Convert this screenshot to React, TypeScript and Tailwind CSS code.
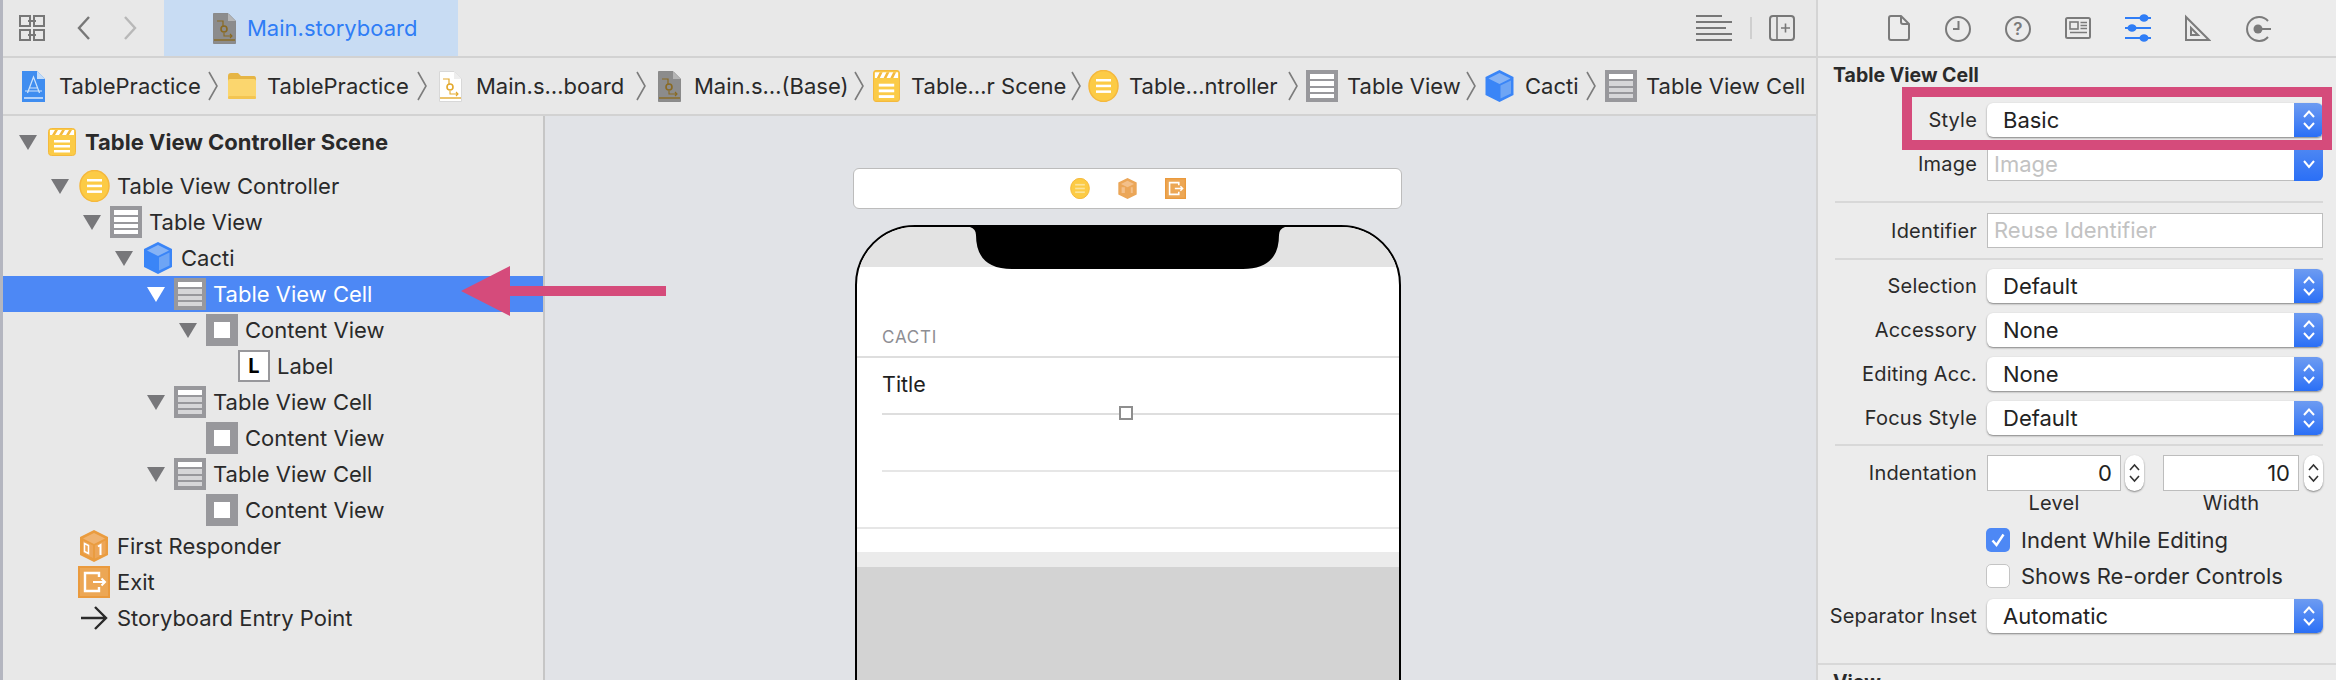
const font = "font-['Inter','Liberation_Sans',sans-serif]";

function Triangle({ white }: { white?: boolean }) {
  return (
    <svg width="18" height="15" viewBox="0 0 18 15" className="shrink-0">
      <path d="M0 0H18L9 15Z" fill={white ? "#ffffff" : "#77777a"} />
    </svg>
  );
}

function SceneIcon({ w = 28, h = 28 }: { w?: number; h?: number }) {
  return (
    <svg width={w} height={h} viewBox="0 0 28 28" preserveAspectRatio="none" className="shrink-0">
      <rect x="0.5" y="0.5" width="27" height="27" rx="3" fill="#fbcb47" stroke="#f4b93d" />
      <rect x="2" y="2" width="24" height="5" fill="#ffffff" />
      <path d="M4 7l3-5h3l-3 5zM11 7l3-5h3l-3 5zM18 7l3-5h3l-3 5z" fill="#f4b93d" />
      <rect x="6" y="12" width="16" height="2.5" fill="#fff" />
      <rect x="6" y="17" width="16" height="2.5" fill="#fff" />
      <rect x="6" y="22" width="16" height="2.5" fill="#fff" />
    </svg>
  );
}

function ControllerIcon({ w = 31, h = 32, lines = "#ffffff" }: { w?: number; h?: number; lines?: string }) {
  return (
    <svg width={w} height={h} viewBox="0 0 31 32" preserveAspectRatio="none" className="shrink-0">
      <ellipse cx="15.5" cy="16" rx="14.5" ry="15.5" fill="#fccb45" stroke="#f5b83c" strokeWidth="1.5" />
      <rect x="8" y="9" width="15" height="2.5" fill={lines} />
      <rect x="8" y="14.7" width="15" height="2.5" fill={lines} />
      <rect x="8" y="20.4" width="15" height="2.5" fill={lines} />
    </svg>
  );
}

function TableIcon() {
  return (
    <svg width="32" height="32" viewBox="0 0 32 32" className="shrink-0">
      <rect width="32" height="32" fill="#98989c" />
      <rect x="4" y="4" width="24" height="5" fill="#fff" />
      <rect x="4" y="11" width="24" height="5" fill="#fff" />
      <rect x="4" y="18" width="24" height="4" fill="#fff" />
      <rect x="4" y="24" width="24" height="4" fill="#fff" />
    </svg>
  );
}

function CellIcon() {
  return (
    <svg width="32" height="32" viewBox="0 0 32 32" className="shrink-0">
      <rect width="32" height="32" fill="#98989c" />
      <rect x="4" y="4" width="24" height="5" fill="#fff" />
      <rect x="4" y="11" width="24" height="5" fill="#d6d6d8" />
      <rect x="4" y="18" width="24" height="4" fill="#d6d6d8" />
      <rect x="4" y="24" width="24" height="4" fill="#d6d6d8" />
    </svg>
  );
}

function ContentIcon() {
  return (
    <svg width="32" height="32" viewBox="0 0 32 32" className="shrink-0">
      <rect width="32" height="32" fill="#98989c" />
      <rect x="8" y="8" width="16" height="16" fill="#fff" />
    </svg>
  );
}

function LabelIcon() {
  return (
    <div className="w-8 h-8 shrink-0 border-2 border-[#98989c] bg-white flex items-center justify-center text-[20px] font-bold text-black">
      L
    </div>
  );
}

function CubeIcon({ w = 28, h = 32 }: { w?: number; h?: number }) {
  return (
    <svg width={w} height={h} viewBox="0 0 28 32" className="shrink-0">
      <path d="M14 0L28 7V25L14 32L0 25V7Z" fill="#3a85f7" />
      <path d="M14 3L25 8.5L14 14L3 8.5Z" fill="#86b3f5" />
      <path d="M3 10.5L13 15.5V28L3 23Z" fill="#3a85f7" />
      <path d="M15 15.5L25.5 10.5V23.5L15 28.5Z" fill="#6ea5f5" />
    </svg>
  );
}

function ResponderIcon() {
  return (
    <svg width="28" height="32" viewBox="0 0 28 32" className="shrink-0">
      <path d="M14 0L28 7V25L14 32L0 25V7Z" fill="#ea9c3f" />
      <path d="M14 3L25 8.5L14 14L3 8.5Z" fill="#f0b370" />
      <path d="M3 10.5L13 15.5V28L3 23Z" fill="#eda658" />
      <path d="M15 15.5L25.5 10.5V23.5L15 28.5Z" fill="#eda658" />
      <path d="M4.500 13.500l4 2v8l-4-2z" fill="none" stroke="#fff" strokeWidth="1.5" />
      <path d="M18 16.500L20.500 15V25" fill="none" stroke="#fff" strokeWidth="2" />
    </svg>
  );
}

function ExitIcon({ w = 32, h = 32 }: { w?: number; h?: number }) {
  return (
    <svg width={w} height={h} viewBox="0 0 32 32" className="shrink-0">
      <rect width="32" height="32" fill="#eca755" />
      <rect x="1" y="1" width="30" height="30" fill="none" stroke="#ea9a3d" strokeWidth="2" />
      <path d="M21 11V7H7V25H21V21" fill="none" stroke="#fff" strokeWidth="2.4" />
      <path d="M15 16H27M23.500 12.500L27 16L23.500 19.500" fill="none" stroke="#fff" strokeWidth="2" />
    </svg>
  );
}

function EntryArrow() {
  return (
    <svg width="28" height="24" viewBox="0 0 28 24" className="shrink-0">
      <path d="M1 12H26M15 1L26 12L15 23" fill="none" stroke="#2a2a2a" strokeWidth="2.4" />
    </svg>
  );
}

function DocIcon({ tone }: { tone: "dark" | "light" }) {
  const fill = tone === "dark" ? "#8c8c8c" : "#ffffff";
  const line = tone === "dark" ? "#8a6a22" : "#e3a92e";
  return (
    <svg width="23" height="31" viewBox="0 0 23 31" className="shrink-0">
      <path d="M0.5 0.5H15L22.5 8V30.5H0.5Z" fill={fill} stroke={tone === "dark" ? "#8a8a8a" : "#d8d8d8"} />
      <path d="M15 0.5V8H22.5Z" fill={tone === "dark" ? "#b5b5b5" : "#eeeeee"} />
      <path d="M4 8H10V14" fill="none" stroke={line} strokeWidth="1.2" />
      <circle cx="11" cy="16" r="3" fill="none" stroke={line} strokeWidth="1.6" />
      <path d="M11 20V23H19M17 21L19 23L17 25" fill="none" stroke={line} strokeWidth="1.1" />
      <path d="M1 27H22" stroke={line} strokeWidth="1.4" />
    </svg>
  );
}

function ProjectIcon() {
  return (
    <svg width="23" height="31" viewBox="0 0 23 31" className="shrink-0">
      <path d="M0 0H15L23 8V31H0Z" fill="#3f8df0" />
      <path d="M15 0V8H23Z" fill="#c4ddf9" />
      <path d="M5.500 22L11.500 6L17.500 22M7.500 17H15.500M3 20H20" fill="none" stroke="#cfe4fb" strokeWidth="1.2" />
      <path d="M2 27H21" stroke="#e4f0fd" strokeWidth="1.4" />
    </svg>
  );
}

function FolderIcon() {
  return (
    <svg width="30" height="30" viewBox="0 0 30 30" className="shrink-0">
      <path d="M1 5Q1 2 4 2H11L14 5H27Q29 5 29 8V26Q29 28 27 28H3Q1 28 1 26Z" fill="#e6b544" />
      <rect x="1" y="8" width="28" height="20" rx="2" fill="#fbd66e" />
      <rect x="1" y="25" width="28" height="3" rx="1.500" fill="#f3c552" />
    </svg>
  );
}

function CrumbChevron() {
  return (
    <svg width="10" height="30" viewBox="0 0 10 30" className="shrink-0">
      <path d="M1 1L9 15L1 29" fill="none" stroke="#7c7c7c" strokeWidth="1.6" />
    </svg>
  );
}

function Crumb({ icon, text, w, gap }: { icon: React.ReactNode; text: string; w: string; gap: string }) {
  return (
    <div className="flex items-center h-full shrink-0">
      {icon}
      <span className={`${gap} ${w} whitespace-nowrap`}>{text}</span>
    </div>
  );
}

function TreeRow({
  depth,
  icon,
  text,
  open,
  selected,
  bold,
}: {
  depth: number;
  icon: React.ReactNode;
  text: string;
  open?: boolean;
  selected?: boolean;
  bold?: boolean;
}) {
  return (
    <div
      className={`flex items-center h-9 ${selected ? "bg-[#4d88f5] text-white" : "text-[#2a2a2a]"} ${bold ? "font-bold" : ""}`}
      style={{ paddingLeft: 16 + depth * 32 }}
    >
      <div className="w-[27px] shrink-0">{open && <Triangle white={selected} />}</div>
      <div className="w-8 shrink-0 flex justify-center">{icon}</div>
      <span className="ml-[7px] whitespace-nowrap">{text}</span>
    </div>
  );
}

function UpDown() {
  return (
    <svg width="16" height="24" viewBox="0 0 16 24">
      <path d="M3 9L8 3.5L13 9M3 15L8 20.5L13 15" fill="none" stroke="#ffffff" strokeWidth="2" />
    </svg>
  );
}

function PopUp({ value }: { value: string }) {
  return (
    <div className="w-[336px] h-[34px] flex rounded-[6px] bg-white shadow-[0_1px_2px_rgba(0,0,0,0.45)] overflow-hidden">
      <div className="flex-1 pl-4 flex items-center text-[#222] text-[22px] tracking-normal">{value}</div>
      <div className="w-[29px] flex items-center justify-center bg-gradient-to-b from-[#6d9bf1] to-[#2a6ff6]">
        <UpDown />
      </div>
    </div>
  );
}

function FormRow({ label, className, children }: { label: string; className: string; children: React.ReactNode }) {
  return (
    <div className={`flex items-center ${className}`}>
      <div className="w-[159px] text-right shrink-0 text-[#2a2a2a] whitespace-nowrap">{label}</div>
      <div className="ml-[10px]">{children}</div>
    </div>
  );
}

function Stepper() {
  return (
    <div className="w-[19px] h-9 rounded-full bg-white shadow-[0_1px_2px_rgba(0,0,0,0.45)] flex items-center justify-center shrink-0">
      <svg width="13" height="24" viewBox="0 0 13 24">
        <path d="M2 9L6.5 4L11 9M2 15L6.5 20L11 15" fill="none" stroke="#333" strokeWidth="1.6" />
      </svg>
    </div>
  );
}

function Divider({ className }: { className: string }) {
  return <div className={`h-[2px] bg-[#d8d8d8] ml-[17px] mr-[13px] ${className}`} />;
}

function InspectorTabs() {
  const gray = "#7b7b7b";
  return (
    <div className="h-[58px] border-b-2 border-[#d4d4d4] flex items-center pl-[67px] gap-[34px]">
      <svg width="26" height="28" viewBox="0 0 26 28" fill="none" stroke={gray} strokeWidth="2">
        <path d="M6 2H16L24 10V24Q24 26 22 26H6Q4 26 4 24V4Q4 2 6 2ZM16 2V8Q16 10 18 10H24" strokeLinejoin="round" />
      </svg>
      <svg width="26" height="28" viewBox="0 0 26 28" fill="none" stroke={gray} strokeWidth="2">
        <circle cx="13" cy="15" r="12" />
        <path d="M13.500 7V15H8" />
      </svg>
      <svg width="26" height="28" viewBox="0 0 26 28" fill="none" stroke={gray} strokeWidth="2">
        <circle cx="13" cy="15" r="12" />
        <text x="13" y="21" fontSize="17" fill={gray} stroke="none" textAnchor="middle" fontFamily="Inter" fontWeight="600">
          ?
        </text>
      </svg>
      <svg width="26" height="28" viewBox="0 0 26 28" fill="none" stroke={gray} strokeWidth="2">
        <rect x="1" y="4" width="24" height="20" rx="1.5" />
        <rect x="5" y="8" width="8" height="7" strokeWidth="1.6" />
        <path d="M15.500 8.500H22M15.500 11.500H22M15.500 14.500H22M5 18.500H22" strokeWidth="1.4" />
      </svg>
      <svg width="26" height="28" viewBox="0 0 26 28" fill="#2f7df6" stroke="#2f7df6" strokeWidth="2">
        <path d="M0 4H26M0 14H26M0 24H26" />
        <ellipse cx="19" cy="4" rx="3.5" ry="2.8" />
        <ellipse cx="7" cy="14" rx="3.5" ry="2.8" />
        <ellipse cx="19" cy="24" rx="3.5" ry="2.8" />
      </svg>
      <svg width="26" height="28" viewBox="0 0 26 28" fill="none" stroke={gray} strokeWidth="2">
        <path d="M1 3V26H24ZM6 14V21H13Z" strokeLinejoin="miter" />
      </svg>
      <svg width="26" height="28" viewBox="0 0 26 28" fill="none" stroke={gray} strokeWidth="2">
        <path d="M23 7A12 12 0 1 0 23 23" />
        <circle cx="13" cy="15" r="4.5" fill={gray} stroke="none" />
        <path d="M13 15H26" />
      </svg>
    </div>
  );
}

function Inspector() {
  return (
    <div className="w-[520px] shrink-0 bg-[#ececec] border-l-2 border-[#d4d4d4] relative overflow-hidden tracking-[0.2px] text-[20px]">
      <InspectorTabs />
      <div className="ml-[15px] mt-[4px] h-[26px] leading-[26px] font-bold text-[#2a2a2a] text-[19.5px] tracking-normal">Table View Cell</div>
      <FormRow label="Style" className="mt-[15px]">
        <PopUp value="Basic" />
      </FormRow>
      <FormRow label="Image" className="mt-[10px]">
        <div className="w-[336px] h-[34px] flex bg-white border border-[#bdbdbd] rounded-r-[6px]">
          <div className="flex-1 pl-[6px] flex items-center text-[#c2c2c2] text-[22px] tracking-normal">Image</div>
          <div className="w-[29px] -my-px -mr-px flex items-center justify-center rounded-br-[6px] bg-gradient-to-b from-[#4f88f2] to-[#2a6ff6]">
            <svg width="16" height="12" viewBox="0 0 16 12">
              <path d="M3 3L8 9L13 3" fill="none" stroke="#fff" strokeWidth="2" />
            </svg>
          </div>
        </div>
      </FormRow>
      <Divider className="mt-[20px]" />
      <FormRow label="Identifier" className="mt-[10px]">
        <div className="w-[336px] h-[35px] bg-white border border-[#bdbdbd] pl-[6px] flex items-center text-[#c2c2c2] text-[22px] tracking-normal">Reuse Identifier</div>
      </FormRow>
      <Divider className="mt-[10px]" />
      <FormRow label="Selection" className="mt-[9px]">
        <PopUp value="Default" />
      </FormRow>
      <FormRow label="Accessory" className="mt-[10px]">
        <PopUp value="None" />
      </FormRow>
      <FormRow label="Editing Acc." className="mt-[10px]">
        <PopUp value="None" />
      </FormRow>
      <FormRow label="Focus Style" className="mt-[10px]">
        <PopUp value="Default" />
      </FormRow>
      <Divider className="mt-[9px]" />
      <FormRow label="Indentation" className="mt-[9px]">
        <div className="flex items-center text-[22px] tracking-normal">
          <div className="w-[134px] h-9 bg-white border border-[#bdbdbd] flex items-center justify-end pr-2 text-[#222]">0</div>
          <div className="ml-[4px]">
            <Stepper />
          </div>
          <div className="ml-[19px] w-[136px] h-9 bg-white border border-[#bdbdbd] flex items-center justify-end pr-2 text-[#222]">10</div>
          <div className="ml-[5px]">
            <Stepper />
          </div>
        </div>
      </FormRow>
      <div className="flex ml-[169px] h-6 items-center text-[#2a2a2a]">
        <div className="w-[134px] text-center">Level</div>
        <div className="w-[136px] ml-[42px] text-center">Width</div>
      </div>
      <div className="flex items-center ml-[168px] mt-[13px] h-6 text-[#2a2a2a] text-[22px] tracking-normal">
        <div className="w-6 h-6 rounded-[5px] bg-[#4d88f5] flex items-center justify-center">
          <svg width="16" height="16" viewBox="0 0 16 16">
            <path d="M2.5 8.5L6.5 13L13.5 2.5" fill="none" stroke="#fff" strokeWidth="2.4" />
          </svg>
        </div>
        <span className="ml-[11px] whitespace-nowrap">Indent While Editing</span>
      </div>
      <div className="flex items-center ml-[168px] mt-[12px] h-6 text-[#2a2a2a] text-[22px] tracking-normal">
        <div className="w-6 h-6 rounded-[5px] bg-white border border-[#c4c4c4]" />
        <span className="ml-[11px] whitespace-nowrap">Shows Re-order Controls</span>
      </div>
      <FormRow label="Separator Inset" className="mt-[11px]">
        <PopUp value="Automatic" />
      </FormRow>
      <div className="h-[2px] bg-[#d8d8d8] mt-[30px]" />
      <div className="ml-[15px] mt-[3px] font-bold text-[#2a2a2a] text-[19.5px] tracking-normal">View</div>
      {/* pink annotation box */}
      <div className="absolute left-[84px] top-[87px] w-[430px] h-[63px] border-[10px] border-[#d54b7b]" />
    </div>
  );
}

function CubeFaded() {
  return (
    <svg width="19" height="21" viewBox="0 0 28 32" className="shrink-0">
      <path d="M14 0L28 7V25L14 32L0 25V7Z" fill="#eba658" />
      <path d="M14 4L24 9L14 14L4 9Z" fill="#f3c08a" />
      <path d="M5 14h5v9h-5zM19 14h3v9h-3z" fill="#f3c08a" />
    </svg>
  );
}

function Canvas() {
  return (
    <div className="flex-1 bg-[#e1e3e7] pl-[308px] pt-[52px] overflow-hidden">
      <div className="w-[549px] h-[41px] bg-white rounded-[6px] border border-[#bcbcbc] flex items-center justify-center gap-[28px]">
        <ControllerIcon w={20} h={21} lines="#fbe39a" />
        <CubeFaded />
        <ExitIcon w={21} h={21} />
      </div>
      <div className="relative w-[546px] h-[500px] ml-[2px] mt-[16px] border-2 border-black rounded-t-[60px] overflow-hidden bg-white">
        <div className="h-10 bg-[#e3e3e3]" />
        <svg width="315" height="42" viewBox="0 0 315 42" className="absolute left-[113px] top-0">
          <path d="M0 0H315Q309 2 309 8Q309 42 273 42H42Q6 42 6 8Q6 2 0 0Z" fill="#000" />
        </svg>
        <div className="h-[89px] flex items-end pb-[6px] pl-[25px] text-[17px] tracking-[0.8px] text-[#8e8e93]">CACTI</div>
        <div className="h-[2px] bg-[#dedede]" />
        <div className="h-[55px] pl-[25px] pb-[3px] flex items-center text-[21.5px] text-[#1e1e1e]">Title</div>
        <div className="h-[2px] bg-[#dedede] ml-[25px]" />
        <div className="absolute left-[262px] top-[179px] w-[14px] h-[14px] bg-white border-2 border-[#8e8e8e]" />
        <div className="h-[55px]" />
        <div className="h-[2px] bg-[#e6e6e6] ml-[25px]" />
        <div className="h-[55px]" />
        <div className="h-[2px] bg-[#e6e6e6]" />
        <div className="h-[23px]" />
        <div className="h-[15px] bg-[#ebebeb]" />
        <div className="h-[120px] bg-[#d3d3d3]" />
      </div>
    </div>
  );
}

export default function App() {
  return (
    <div className={`w-[2336px] h-[680px] flex overflow-hidden bg-[#e8e8e8] border-l-[3px] border-[#b4b6c0] text-[22px] text-[#2a2a2a] ${font}`}>
      <div className="flex-1 min-w-0 flex flex-col relative">
        {/* top toolbar */}
        <div className="h-[58px] shrink-0 border-b-2 border-[#d2d2d2] flex items-center relative">
          <svg width="26" height="26" viewBox="0 0 26 26" className="ml-4" fill="none" stroke="#777" strokeWidth="2">
            <rect x="1" y="1" width="10" height="10" />
            <rect x="15" y="1" width="10" height="10" />
            <rect x="1" y="15" width="10" height="10" />
            <rect x="15" y="15" width="10" height="10" />
            <path d="M9 6H17M9 20H17" />
          </svg>
          <svg width="14" height="24" viewBox="0 0 14 24" className="ml-8" fill="none" stroke="#777" strokeWidth="2.4">
            <path d="M12 1L2 12L12 23" />
          </svg>
          <svg width="14" height="24" viewBox="0 0 14 24" className="ml-8" fill="none" stroke="#b8b8b8" strokeWidth="2.4">
            <path d="M2 1L12 12L2 23" />
          </svg>
          <div className="ml-[27px] w-[294px] h-full bg-[#c8dcf3] flex items-center pl-[49px] text-[#2f7df6]">
            <DocIcon tone="dark" />
            <span className="ml-[11px]">Main.storyboard</span>
          </div>
          <div className="flex-1" />
          <svg width="36" height="26" viewBox="0 0 36 26" fill="none" stroke="#777" strokeWidth="2">
            <path d="M0 1H26M0 7H36M0 13H30M0 19H36M0 25H36" />
          </svg>
          <div className="w-[2px] h-[22px] bg-[#cfcfcf] ml-[18px]" />
          <svg width="26" height="26" viewBox="0 0 26 26" className="ml-[17px] mr-[21px]" fill="none" stroke="#777" strokeWidth="2">
            <rect x="1" y="1" width="24" height="24" rx="3" />
            <path d="M8 1V25M12 13H21M16.500 8.500V17.500" strokeWidth="1.6" />
          </svg>
        </div>
        {/* jump bar */}
        <div className="h-[58px] shrink-0 border-b-2 border-[#d2d2d2] flex items-center text-[#2a2a2a] overflow-hidden">
          <div className="w-[19px] shrink-0" />
          <Crumb icon={<ProjectIcon />} text="TablePractice" w="w-[140px]" gap="ml-[14px]" />
          <div className="ml-[9px] mr-[9px]"><CrumbChevron /></div>
          <Crumb icon={<FolderIcon />} text="TablePractice" w="w-[140px]" gap="ml-[10px]" />
          <div className="ml-[10px] mr-[12px]"><CrumbChevron /></div>
          <Crumb icon={<DocIcon tone="light" />} text="Main.s…board" w="w-[144px]" gap="ml-[14px]" />
          <div className="ml-[16px] mr-[12px]"><CrumbChevron /></div>
          <Crumb icon={<DocIcon tone="dark" />} text="Main.s…(Base)" w="w-[152px]" gap="ml-[13px]" />
          <div className="ml-[8px] mr-[9px]"><CrumbChevron /></div>
          <Crumb icon={<SceneIcon w={27} h={32} />} text="Table…r Scene" w="w-[153px]" gap="ml-[11px]" />
          <div className="ml-[7px] mr-[7px]"><CrumbChevron /></div>
          <Crumb icon={<ControllerIcon />} text="Table…ntroller" w="w-[147px]" gap="ml-[10px]" />
          <div className="ml-[12px] mr-[8px]"><CrumbChevron /></div>
          <Crumb icon={<TableIcon />} text="Table View" w="w-[111px]" gap="ml-[9px]" />
          <div className="ml-[8px] mr-[9px]"><CrumbChevron /></div>
          <Crumb icon={<CubeIcon w={29} />} text="Cacti" w="w-[52px]" gap="ml-[11px]" />
          <div className="ml-[9px] mr-[9px]"><CrumbChevron /></div>
          <Crumb icon={<CellIcon />} text="Table View Cell" w="w-[157px]" gap="ml-[9px]" />
        </div>
        {/* outline + canvas */}
        <div className="flex-1 flex min-h-0">
          <div className="w-[542px] shrink-0 border-r-2 border-[#c6c6c6] pt-2">
            <TreeRow depth={0} icon={<SceneIcon />} text="Table View Controller Scene" open bold />
            <div className="h-2" />
            <TreeRow depth={1} icon={<ControllerIcon />} text="Table View Controller" open />
            <TreeRow depth={2} icon={<TableIcon />} text="Table View" open />
            <TreeRow depth={3} icon={<CubeIcon />} text="Cacti" open />
            <TreeRow depth={4} icon={<CellIcon />} text="Table View Cell" open selected />
            <TreeRow depth={5} icon={<ContentIcon />} text="Content View" open />
            <TreeRow depth={6} icon={<LabelIcon />} text="Label" />
            <TreeRow depth={4} icon={<CellIcon />} text="Table View Cell" open />
            <TreeRow depth={5} icon={<ContentIcon />} text="Content View" />
            <TreeRow depth={4} icon={<CellIcon />} text="Table View Cell" open />
            <TreeRow depth={5} icon={<ContentIcon />} text="Content View" />
            <TreeRow depth={1} icon={<ResponderIcon />} text="First Responder" />
            <TreeRow depth={1} icon={<ExitIcon />} text="Exit" />
            <TreeRow depth={1} icon={<EntryArrow />} text="Storyboard Entry Point" />
          </div>
          <Canvas />
        </div>
        {/* pink annotation arrow */}
        <svg width="206" height="50" viewBox="0 0 206 50" className="absolute left-[458px] top-[266px]">
          <path d="M0 25L49 0V20H205V30H49V50Z" fill="#d54b7b" />
        </svg>
      </div>
      <Inspector />
    </div>
  );
}
